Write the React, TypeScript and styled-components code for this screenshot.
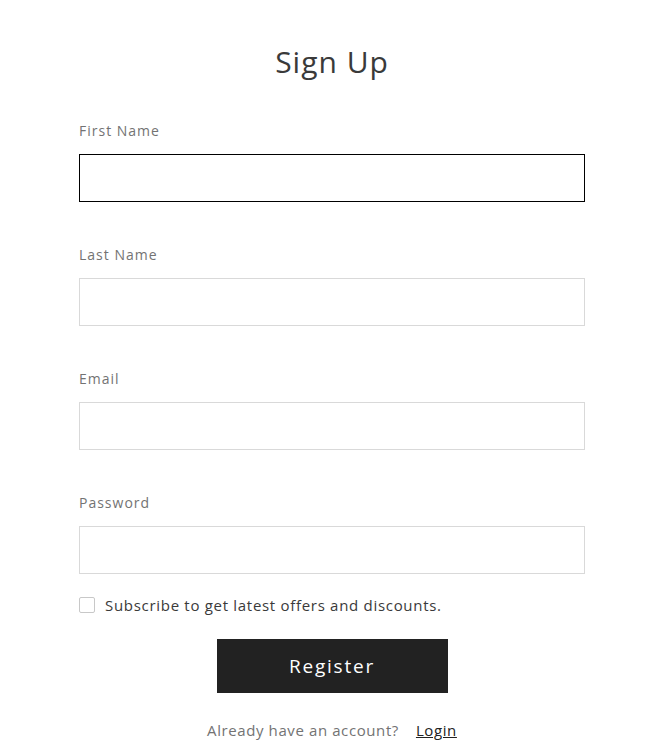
import React from "react";
import styled, { createGlobalStyle } from "styled-components";

const Global = createGlobalStyle`
  html, body { margin: 0; padding: 0; background: #fff; }
  body { font-family: "Open Sans", "Noto Sans", sans-serif; }
  * { box-sizing: border-box; }
`;

const Page = styled.div`
  width: 655px;
  padding: 40px 70px 0 79px;
`;

const Form = styled.form`
  width: 506px;
  display: flex;
  flex-direction: column;
`;

const Title = styled.h1`
  margin: 0 0 37px;
  text-align: center;
  font-weight: 400;
  font-size: 30px;
  line-height: 44px;
  color: #3a3a3a;
  letter-spacing: 1px;
`;

const Fields = styled.div`
  display: flex;
  flex-direction: column;
  gap: 43px;
`;

const Field = styled.div`
  display: flex;
  flex-direction: column;
`;

const Label = styled.label`
  font-size: 14px;
  line-height: 20px;
  color: #737373;
  letter-spacing: 1px;
  margin-bottom: 13px;
`;

const Input = styled.input<{ $focused?: boolean }>`
  height: 48px;
  width: 100%;
  border: 1px solid ${(p) => (p.$focused ? "#000" : "#d9d9d9")};
  outline: none;
  background: #fff;
  font: inherit;
  padding: 0 12px;
`;

const CheckRow = styled.label`
  display: flex;
  align-items: center;
  gap: 10px;
  margin-top: 20px;
  font-size: 15px;
  line-height: 22px;
  color: #3a3a3a;
  letter-spacing: 0.7px;
`;

const Box = styled.span`
  width: 16px;
  height: 16px;
  border: 1px solid #c8c8c8;
  border-radius: 2px;
  background: #fff;
`;

const Button = styled.button`
  align-self: center;
  margin-top: 23px;
  width: 231px;
  height: 54px;
  background: #222;
  color: #fff;
  border: none;
  font: inherit;
  font-size: 19px;
  letter-spacing: 1.8px;
`;

const Footer = styled.p`
  margin: 26px 0 0;
  text-align: center;
  font-size: 15px;
  line-height: 22px;
  color: #737373;
  letter-spacing: 0.6px;
`;

const LoginLink = styled.a`
  margin-left: 17px;
  color: #222;
  text-decoration: underline;
`;

const fields = [
  { label: "First Name", type: "text", focused: true },
  { label: "Last Name", type: "text" },
  { label: "Email", type: "email" },
  { label: "Password", type: "password" },
];

export default function App() {
  return (
    <Page>
      <Global />
      <Form onSubmit={(e) => e.preventDefault()}>
        <Title>Sign Up</Title>
        <Fields>
          {fields.map((f) => (
            <Field key={f.label}>
              <Label>{f.label}</Label>
              <Input type={f.type} $focused={f.focused} />
            </Field>
          ))}
        </Fields>
        <CheckRow>
          <Box />
          Subscribe to get latest offers and discounts.
        </CheckRow>
        <Button type="submit">Register</Button>
        <Footer>
          Already have an account?
          <LoginLink href="#">Login</LoginLink>
        </Footer>
      </Form>
    </Page>
  );
}
